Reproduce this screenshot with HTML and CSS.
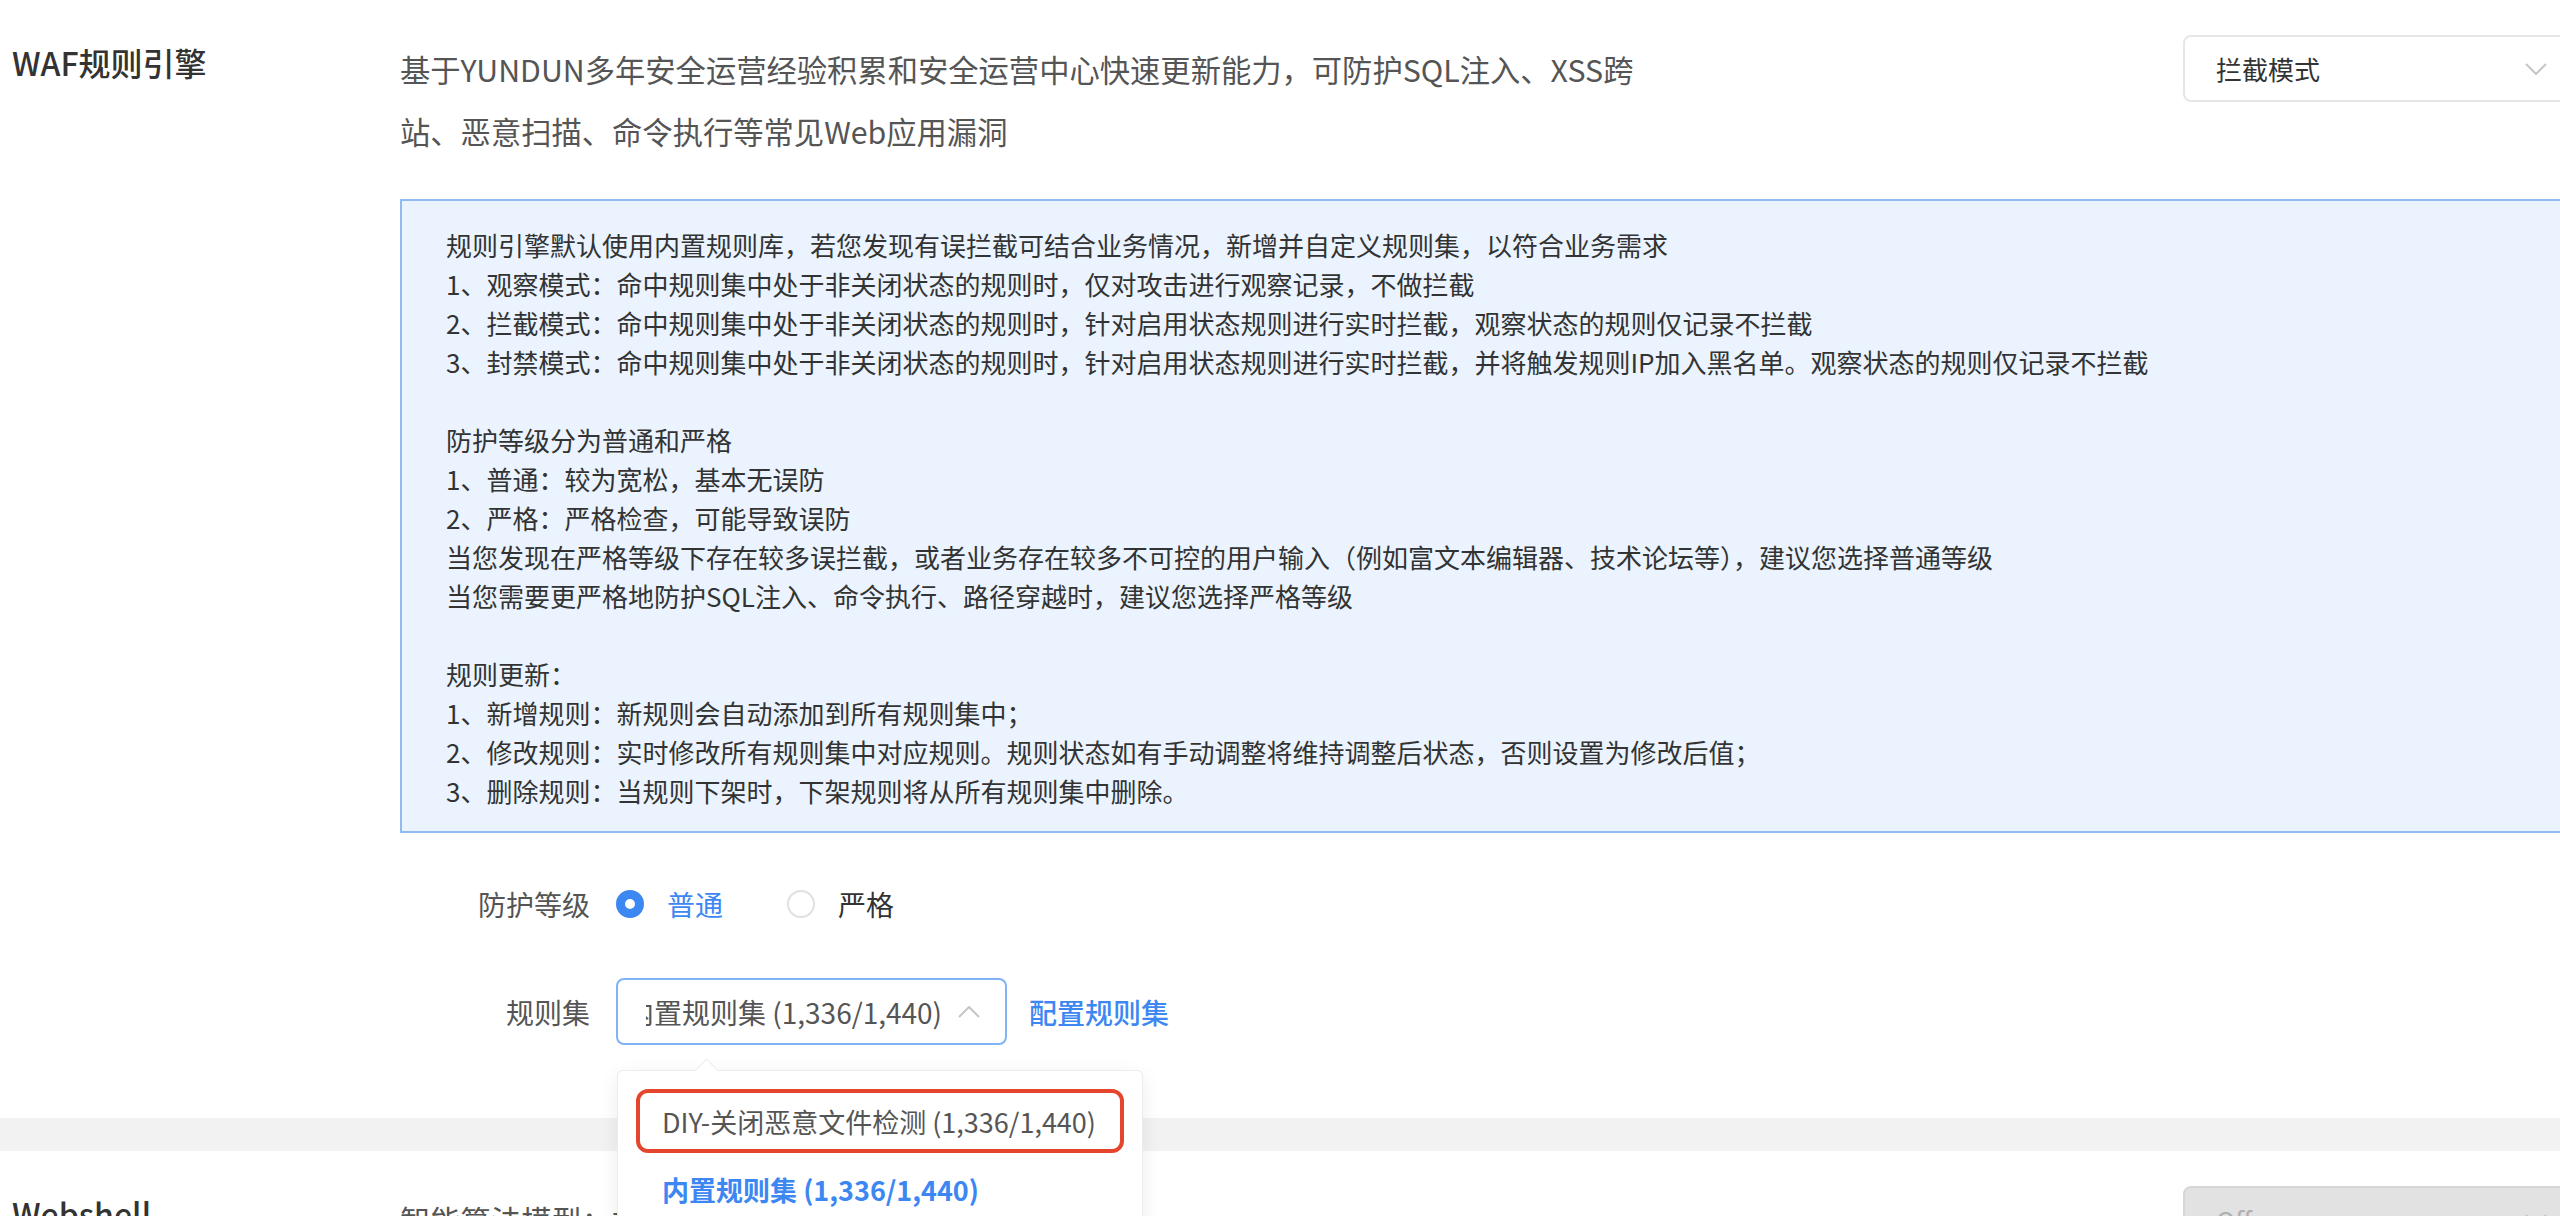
FILE: index.html
```html
<!DOCTYPE html>
<html lang="zh-CN">
<head>
    <meta charset="UTF-8">
    <meta name="viewport" content="width=device-width, initial-scale=1.0">
    <title>WAF规则引擎</title>
    <link rel="stylesheet" href="styles.css">
</head>
<body>
    <div class="page">
        <section class="card">
            <div class="card-head">
                <h3 class="card-title">WAF规则引擎</h3>
                <p class="card-desc">基于YUNDUN多年安全运营经验积累和安全运营中心快速更新能力，可防护SQL注入、XSS跨站、恶意扫描、命令执行等常见Web应用漏洞</p>
                <div class="mode-select">
                    <span>拦截模式</span>
                    <svg class="chevron" width="22" height="12" viewBox="0 0 22 12"><path d="M1 1l10 10 10-10"/></svg>
                </div>
            </div>

            <div class="card-body">
                <div class="notice">
                    <p>规则引擎默认使用内置规则库，若您发现有误拦截可结合业务情况，新增并自定义规则集，以符合业务需求<br>
                    1、观察模式：命中规则集中处于非关闭状态的规则时，仅对攻击进行观察记录，不做拦截<br>
                    2、拦截模式：命中规则集中处于非关闭状态的规则时，针对启用状态规则进行实时拦截，观察状态的规则仅记录不拦截<br>
                    3、封禁模式：命中规则集中处于非关闭状态的规则时，针对启用状态规则进行实时拦截，并将触发规则IP加入黑名单。观察状态的规则仅记录不拦截</p>
                    <p>防护等级分为普通和严格<br>
                    1、普通：较为宽松，基本无误防<br>
                    2、严格：严格检查，可能导致误防<br>
                    当您发现在严格等级下存在较多误拦截，或者业务存在较多不可控的用户输入（例如富文本编辑器、技术论坛等），建议您选择普通等级<br>
                    当您需要更严格地防护SQL注入、命令执行、路径穿越时，建议您选择严格等级</p>
                    <p>规则更新：<br>
                    1、新增规则：新规则会自动添加到所有规则集中；<br>
                    2、修改规则：实时修改所有规则集中对应规则。规则状态如有手动调整将维持调整后状态，否则设置为修改后值；<br>
                    3、删除规则：当规则下架时，下架规则将从所有规则集中删除。</p>
                </div>

                <div class="form-row level-row">
                    <span class="form-label">防护等级</span>
                    <label class="radio checked"><span class="radio-dot"></span>普通</label>
                    <label class="radio"><span class="radio-dot"></span>严格</label>
                </div>

                <div class="form-row ruleset-row">
                    <span class="form-label">规则集</span>
                    <div class="rule-select">
                        <div class="rule-select-value"><span>内置规则集 (1,336/1,440)</span></div>
                        <svg class="chevron" width="22" height="12" viewBox="0 0 22 12"><path d="M1 11l10-10 10 10"/></svg>
                        <div class="dropdown">
                            <div class="dropdown-item marked">DIY-关闭恶意文件检测 (1,336/1,440)</div>
                            <div class="dropdown-item selected">内置规则集 (1,336/1,440)</div>
                        </div>
                    </div>
                    <a class="link" href="#">配置规则集</a>
                </div>
            </div>
        </section>

        <section class="card">
            <div class="card-head">
                <h3 class="card-title">Webshell</h3>
                <p class="card-desc">智能算法模型：检测并拦截网站后门上传</p>
                <div class="mode-select disabled">
                    <span>Off</span>
                    <svg class="chevron" width="22" height="12" viewBox="0 0 22 12"><path d="M1 1l10 10 10-10"/></svg>
                </div>
            </div>
        </section>
    </div>
</body>
</html>
```

FILE: styles.css
```css
body {
    margin: 0;
    overflow: hidden;
    background: #f2f2f2;
    font-family: "Noto Sans CJK SC", "Noto Sans", sans-serif;
    color: #333;
}

.page {
    width: 2580px;
}

.card {
    background: white;
    padding: 35px 0 73px 12px;
    margin-bottom: 33px;
}

.card-head {
    display: flex;
    align-items: flex-start;
}

.card-title {
    width: 388px;
    flex-shrink: 0;
    margin: 3px 0 0;
    font-size: 32px;
    line-height: 48px;
    font-weight: 500;
    color: #333;
}

.card-desc {
    width: 1262px;
    margin: 3px 0 0;
    font-size: 30.3px;
    line-height: 62px;
    color: #555;
}

.mode-select {
    margin-left: auto;
    width: 397px;
    height: 67px;
    box-sizing: border-box;
    border: 2px solid #e6e6e6;
    border-radius: 8px;
    padding: 0 31px;
    display: flex;
    align-items: center;
    justify-content: space-between;
    font-size: 26px;
    color: #333;
}

.mode-select.disabled {
    background: #e2e2e2;
    border-color: #d6d6d6;
    color: #b0b0b0;
}

.chevron {
    fill: none;
    stroke: #c6c6c6;
    stroke-width: 2;
    flex-shrink: 0;
}

.card-body {
    margin-left: 388px;
}

.notice {
    margin-top: 37px;
    border: 2px solid #8fbcf2;
    background: #eaf3fe;
    padding: 24px 44px 21px;
    font-size: 26px;
    line-height: 39px;
    color: #333;
}

.notice p {
    margin: 0 0 39px;
}

.notice p:last-child {
    margin-bottom: 0;
}

.form-row {
    display: flex;
    align-items: center;
    height: 67px;
    font-size: 28px;
}

.level-row {
    margin-top: 37px;
}

.ruleset-row {
    margin-top: 41px;
}

.form-label {
    width: 190px;
    text-align: right;
    margin-right: 26px;
    color: #555;
}

.radio {
    display: flex;
    align-items: center;
    gap: 23px;
    margin-right: 64px;
    color: #333;
}

.radio-dot {
    width: 28px;
    height: 28px;
    box-sizing: border-box;
    border-radius: 50%;
    border: 2px solid #e0e0e0;
    background: white;
}

.radio.checked {
    color: #3d87f3;
}

.radio.checked .radio-dot {
    border: 9px solid #3d87f3;
}

.rule-select {
    position: relative;
    width: 391px;
    height: 67px;
    box-sizing: border-box;
    border: 2px solid #80b2f6;
    border-radius: 8px;
    padding: 0 25px 0 28px;
    display: flex;
    align-items: center;
    gap: 18px;
    color: #555;
}

.rule-select-value {
    flex: 1;
    overflow: hidden;
    white-space: nowrap;
}

.rule-select-value span {
    display: inline-block;
    margin-left: -20px;
}

.link {
    margin-left: 22px;
    color: #3d87f3;
    font-weight: 500;
    text-decoration: none;
}

.dropdown {
    position: absolute;
    top: 90px;
    left: -1px;
    width: 526px;
    box-sizing: border-box;
    padding: 18px 18px;
    background: white;
    border: 1px solid #ececec;
    border-radius: 6px;
    box-shadow: 0 6px 20px rgba(0,0,0,0.08);
    z-index: 10;
    font-size: 27px;
}

.dropdown::before {
    content: "";
    position: absolute;
    top: -9px;
    left: 80px;
    width: 16px;
    height: 16px;
    background: white;
    border-top: 1px solid #ececec;
    border-left: 1px solid #ececec;
    transform: rotate(45deg);
}

.dropdown-item {
    height: 64px;
    box-sizing: border-box;
    border: 4px solid transparent;
    border-radius: 12px;
    padding: 0 22px;
    display: flex;
    align-items: center;
    margin-bottom: 4px;
    color: #555;
    white-space: nowrap;
}

.dropdown-item.marked {
    border-color: #e5452d;
}

.dropdown-item.selected {
    color: #3d87f3;
    font-weight: 600;
}
```
